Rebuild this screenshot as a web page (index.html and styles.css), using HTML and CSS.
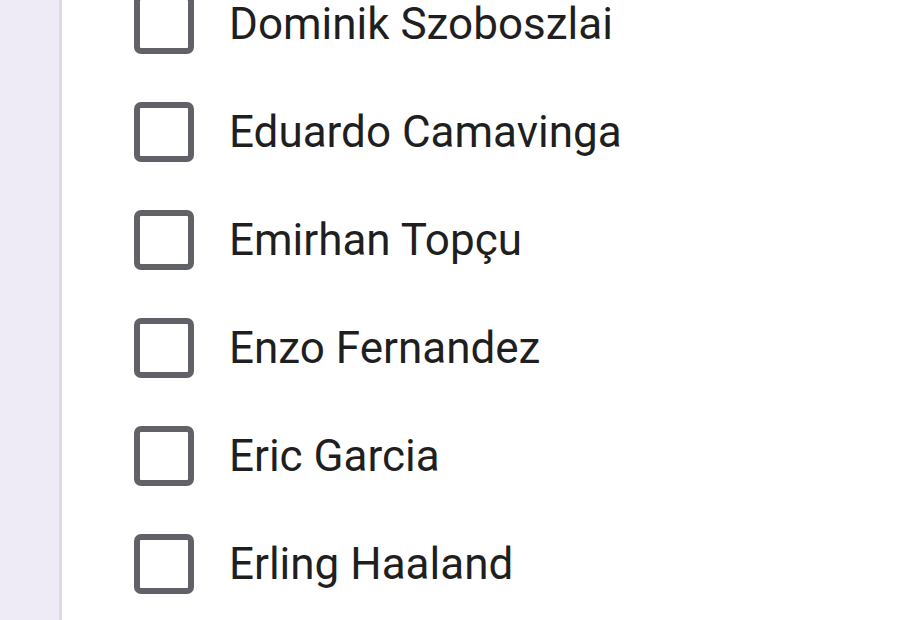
FILE: index.html
```html
<!DOCTYPE html>
<html>
<head>
<meta charset="utf-8">
<link rel="stylesheet" href="styles.css">
</head>
<body>
<div class="layout">
  <aside class="rail"></aside>
  <main class="content">
    <ul class="list">
      <li class="item"><span class="box"></span><span class="label">Dominik Szoboszlai</span></li>
      <li class="item"><span class="box"></span><span class="label">Eduardo Camavinga</span></li>
      <li class="item"><span class="box"></span><span class="label">Emirhan Topçu</span></li>
      <li class="item"><span class="box"></span><span class="label">Enzo Fernandez</span></li>
      <li class="item"><span class="box"></span><span class="label">Eric Garcia</span></li>
      <li class="item"><span class="box"></span><span class="label">Erling Haaland</span></li>
    </ul>
  </main>
</div>
</body>
</html>
```
FILE: styles.css
```css
html, body {
  margin: 0;
  padding: 0;
  height: 100%;
  background: #ffffff;
  overflow: hidden;
}
.layout {
  display: flex;
  height: 620px;
}
.rail {
  width: 59px;
  flex: none;
  background: #eeebf7;
  border-right: 3px solid #dcdbe1;
}
.content {
  flex: 1;
  background: #ffffff;
}
.list {
  list-style: none;
  margin: -30px 0 0 0;
  padding: 0 0 0 72px;
}
.item {
  height: 108px;
  display: flex;
  align-items: center;
}
.box {
  width: 48px;
  height: 48px;
  border: 6px solid #606268;
  border-radius: 7px;
  flex: none;
  margin-right: 35px;
}
.label {
  font-family: Roboto, "Noto Sans", sans-serif;
  font-size: 44px;
  color: #1f1f1f;
  line-height: 1;
}
```
